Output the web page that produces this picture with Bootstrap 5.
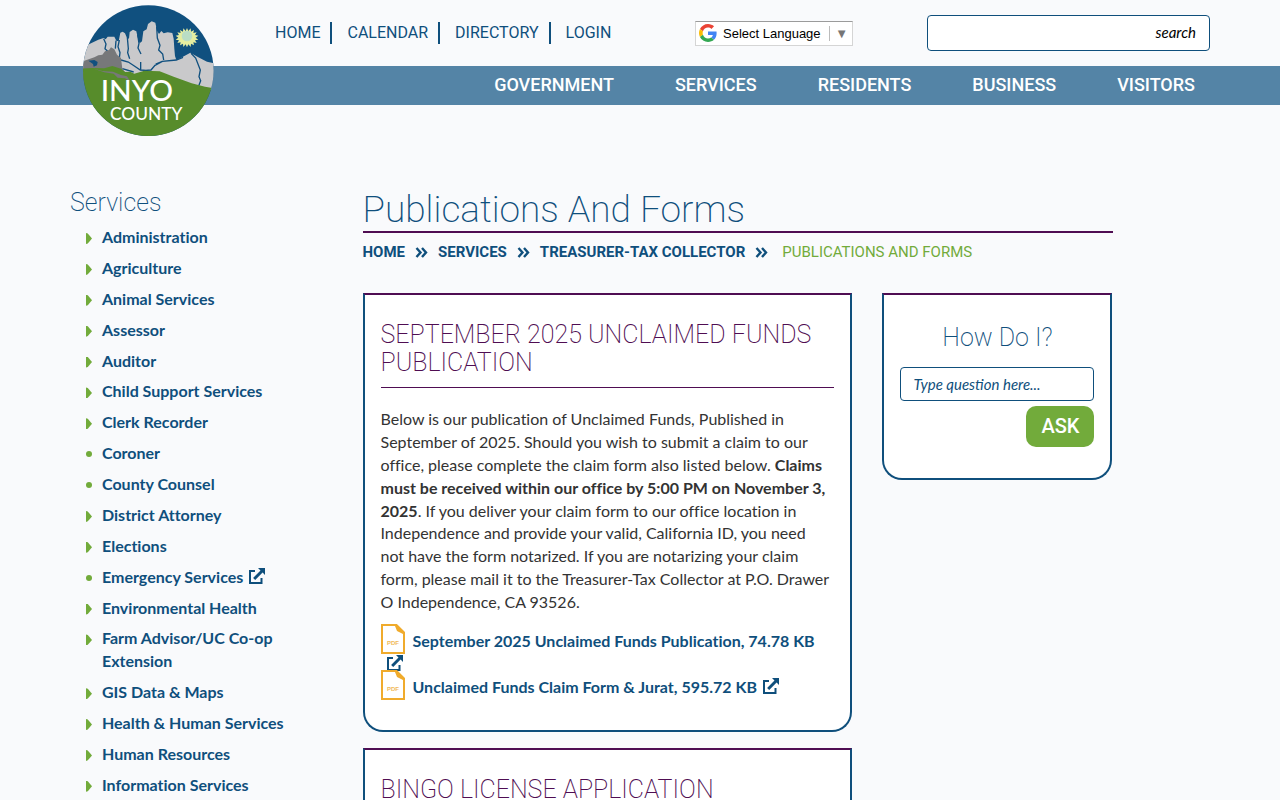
<!DOCTYPE html>
<html lang="en">
<head>
<meta charset="utf-8">
<meta name="viewport" content="width=device-width, initial-scale=1">
<title>Publications And Forms - Inyo County</title>
<link href="https://cdn.jsdelivr.net/npm/bootstrap@5.3.0/dist/css/bootstrap.min.css" rel="stylesheet">
<style>
:root{--navy:#0f4f7c;--steel:#5484a6;--plum:#4f0d52;--leaf:#72ab3b}
body{font-family:Lato,"Liberation Sans",sans-serif;font-size:16px;line-height:1.43;font-variant-ligatures:none;color:#333;background:#f9fafc}
a{color:var(--navy);text-decoration:none}
.site-wrap{max-width:1170px;--bs-gutter-x:30px}
.row{--bs-gutter-x:30px}
.top-strip{height:66px}
.logo-link{position:absolute;left:28px;top:5px;z-index:5}
.logo-link svg{width:131px;height:131px;display:block}
.quick-links{margin-left:205px;font-family:Roboto,sans-serif}
.quick-links li+li{border-left:2px solid var(--navy);margin-left:10px;padding-left:15px}
.translate-box{width:158px;height:25px;background:#fff;border:1px solid #d5d5d5;border-top-color:#9b9b9b;padding:0 4px 0 3px;font:13px "Liberation Sans",Arial,sans-serif}
.translate-box svg{margin-right:6px}
.translate-box select{appearance:none;border:0;background:none;padding:0;width:104px;color:#000;font:inherit}
.translate-box .tri{border-left:1px solid #bbb;color:#767676;padding-left:5px;font-size:13px;line-height:15px}
.site-search{width:283px;height:36px;margin-left:74px;background:#fff;border:1px solid var(--navy);border-radius:4px}
.site-search input{border:0;background:none;min-width:0}
.site-search button{border:0;background:none;font-style:italic;font-size:15px;color:#000;padding:0 13px}
.main-bar{background:var(--steel);height:39px}
.main-bar ul{gap:61px;padding-right:15px}
.main-bar a{color:#fff;font:500 18px/38px Roboto,sans-serif}
.main-area{padding-top:82px}
.thin-head{font-family:Roboto,sans-serif;font-size:25px;font-weight:200;line-height:28px;color:var(--navy);margin:0}
.side-col{padding-top:2px}
.side-menu{margin-top:9px}
.side-menu li{padding-left:32px;margin-bottom:8px;position:relative}
.side-menu a{font-weight:700}
.side-menu li::before{content:"";position:absolute;left:16px;top:7px;width:6px;height:11px;background:var(--leaf);clip-path:polygon(0 0,30% 5%,100% 50%,30% 95%,0 100%)}
.side-menu li.leaf::before{top:9px;width:6px;height:6px;border-radius:50%;clip-path:none}
.ext{width:17px;height:17px;fill:var(--navy);vertical-align:-2px;margin-left:5px}
.page-head{font-family:Roboto,sans-serif;font-size:37px;font-weight:200;line-height:42px;color:var(--navy);border-bottom:2px solid var(--plum);margin:0;padding-top:2px}
.crumbs{font:700 15px/23px Roboto,sans-serif;margin:8px 0 29px}
.crumbs svg{width:13px;height:11px;margin:0 10px;fill:none;stroke:var(--navy);stroke-width:2.4}
.crumbs .here{font-weight:400;color:var(--leaf);margin-left:4px}
.panel-box{background:#fff;border:2px solid var(--navy);border-top-color:var(--plum);border-radius:0 0 20px 20px;padding:26px 16px 31px;margin-bottom:16px}
.panel-box .thin-head.plum{color:var(--plum);text-transform:uppercase;border-bottom:1px solid var(--plum);padding-bottom:10px;margin-bottom:20px}
.files a{font-weight:700}
.pdf{width:24px;height:30px;vertical-align:1px;margin:-8px 8px -8px 0}
.ask-box{padding:29px 16px 31px}
.ask-box .thin-head{margin-bottom:15px}
.ask-box input{height:34px;border:1px solid var(--navy);border-radius:4px;font-size:15px;font-style:italic;padding:0 12px;color:var(--navy)}
.ask-box input::placeholder{color:var(--navy);opacity:1}
.ask-box button{background:var(--leaf);color:#fff;border:0;border-radius:10px;width:68px;height:41px;margin-top:5px;font:500 20px/23px Roboto,sans-serif;padding:0}
</style>
</head>
<body>
<svg width="0" height="0" class="d-none">
  <symbol id="i-ext" viewBox="0 0 17 17"><path d="M1 2h6v2H3v10h9.500v-4h2v6H1z"/><path d="M10 0h7v7l-2.400-2.400-7.400 7.400-2.100-2.100 7.400-7.400z"/></symbol>
  <symbol id="i-pdf" viewBox="0 0 24 30"><path d="M1 1h14.500L23 8.500V29H1z" fill="#fff" stroke="#f0ab2c" stroke-width="2"/><path d="M14 1v1l2 5 6 3h1V8.500L15.500 1z" fill="#f0ab2c"/><text x="12" y="21" text-anchor="middle" font-family="Liberation Sans,sans-serif" font-weight="700" font-size="6" fill="#f0b95a">PDF</text></symbol>
  <symbol id="i-sep" viewBox="0 0 13 11"><path d="M1.500 1l4 4.500-4 4.500M7 1l4 4.500L7 10"/></symbol>
</svg>
<header>
  <div class="container site-wrap position-relative">
    <a class="logo-link" href="#" aria-label="Inyo County home">
      <svg viewBox="38 15 393 393">
        <defs><clipPath id="disc"><circle cx="234" cy="212" r="196"/></clipPath></defs>
        <g clip-path="url(#disc)">
          <path d="M38 15h393v393H38z" fill="#10507f"/>
          <path d="M38 142L62 130 84 119 100 114 106 118 112 110 132 110 138 122 145 124 150 98 157 95 164 100 170 114 176 116 178 96 188 89 198 94 202 112 208 130 215 124 219 94 229 88 233 72 244 64 255 68 260 92 266 102 273 93 280 100 292 97 306 99 310 116 312 146 314 168 318 180 338 170 360 158 384 172 410 185 432 190V270L380 268 300 246 230 222 150 230 38 220z" fill="#c9c9cb"/>
          <path d="M100 116l7 16-3 14 8 8M137 122l-2 24M147 120l-4 20 6 18-2 16M171 112l3 34-2 12 6 18M202 104l4 26-3 14 9 18M259 80l2 34 8 22-4 14 12 12 3 18M338 172l-20 8-42 4-22 12-12 14-24 2M276 184l-20 8M152 180l22 6 18 12 18 12 26 2M211 186v24M156 206l34 10M362 160l14 14 14 36-4 20 5 12-6 16" fill="none" stroke="#10507f" stroke-width="4"/>
          <path d="M36 198L42 182 72 172 84 166 96 164 104 154 116 150 122 142 132 148 140 164 152 174 156 206 184 240H36z" fill="#77787a"/>
          <path d="M54 182l18-2 10 6-2 10-10 4-2-8z" fill="#10507f"/>
          <path d="M36 206l30-2 36 1 24-7 26 8 12 10 16-1 12 6 30-9 46 2 42 16 54 20 40 10 34 6V410H36z" fill="#578c2b"/>
          <path d="M66 205l30 8 32 2 24 10 18 4 10 16-16-10-22-2-12-12-28-4z" fill="#77787a"/>
          <path d="M350 84l4 9 7-8 1 10 9-5-2 9 10-2-5 8 10 2-8 6 8 6-10 2 5 8-10-2 2 9-9-5-1 10-7-8-4 9-4-9-7 8-1-10-9 5 2-9-10 2 5-8-10-2 8-6-8-6 10-2-5-8 10 2-2-9 9 5 1-10 7 8z" fill="#e5eda0"/>
          <circle cx="350" cy="108" r="16" fill="#b9ddc5"/>
          <g font-family="Lato,sans-serif" fill="#fff" font-weight="500">
            <text x="91" y="304" font-size="89">INYO</text>
            <text x="119" y="359" font-size="52">COUNTY</text>
          </g>
        </g>
      </svg>
    </a>
    <div class="top-strip d-flex align-items-center">
      <ul class="quick-links list-unstyled d-flex mb-0">
        <li><a href="#">HOME</a></li><li><a href="#">CALENDAR</a></li><li><a href="#">DIRECTORY</a></li><li><a href="#">LOGIN</a></li>
      </ul>
      <div class="d-flex align-items-center ms-auto">
        <div class="translate-box d-flex align-items-center">
          <svg width="18" height="18" viewBox="0 0 48 48" class="flex-shrink-0"><path fill="#EA4335" d="M24 9.500c3.540 0 6.710 1.220 9.210 3.600l6.850-6.850C35.900 2.380 30.470 0 24 0 14.620 0 6.510 5.380 2.560 13.220l7.980 6.190C12.430 13.720 17.740 9.500 24 9.500z"/><path fill="#4285F4" d="M46.980 24.550c0-1.570-.15-3.090-.38-4.550H24v9.020h12.940c-.58 2.960-2.260 5.480-4.780 7.180l7.730 6c4.510-4.180 7.090-10.360 7.090-17.650z"/><path fill="#FBBC05" d="M10.530 28.590c-.48-1.450-.76-2.990-.76-4.590s.27-3.140.76-4.590l-7.980-6.190C.92 16.460 0 20.120 0 24c0 3.880.92 7.540 2.560 10.780l7.970-6.190z"/><path fill="#34A853" d="M24 48c6.480 0 11.930-2.130 15.890-5.810l-7.730-6c-2.150 1.450-4.920 2.300-8.160 2.300-6.260 0-11.570-4.220-13.470-9.910l-7.980 6.190C6.510 42.620 14.620 48 24 48z"/></svg>
          <select aria-label="Select Language"><option>Select Language</option></select>
          <span class="tri ms-auto">▼</span>
        </div>
        <form class="site-search d-flex">
          <input class="flex-grow-1" type="text" aria-label="Search site"><button type="button">search</button>
        </form>
      </div>
    </div>
  </div>
  <nav class="main-bar">
    <div class="container site-wrap">
      <ul class="list-unstyled d-flex justify-content-end mb-0">
        <li><a href="#">GOVERNMENT</a></li><li><a href="#">SERVICES</a></li><li><a href="#">RESIDENTS</a></li><li><a href="#">BUSINESS</a></li><li><a href="#">VISITORS</a></li>
      </ul>
    </div>
  </nav>
</header>
<div class="container site-wrap main-area">
  <div class="row">
    <aside class="col-3 side-col">
      <h2 class="thin-head">Services</h2>
      <ul class="side-menu list-unstyled">
        <li><a href="#">Administration</a></li>
        <li><a href="#">Agriculture</a></li>
        <li><a href="#">Animal Services</a></li>
        <li><a href="#">Assessor</a></li>
        <li><a href="#">Auditor</a></li>
        <li><a href="#">Child Support Services</a></li>
        <li><a href="#">Clerk Recorder</a></li>
        <li class="leaf"><a href="#">Coroner</a></li>
        <li class="leaf"><a href="#">County Counsel</a></li>
        <li><a href="#">District Attorney</a></li>
        <li><a href="#">Elections</a></li>
        <li class="leaf"><a href="#">Emergency Services<svg class="ext"><use href="#i-ext"/></svg></a></li>
        <li><a href="#">Environmental Health</a></li>
        <li><a href="#">Farm Advisor/UC Co-op<br>Extension</a></li>
        <li><a href="#">GIS Data &amp; Maps</a></li>
        <li><a href="#">Health &amp; Human Services</a></li>
        <li><a href="#">Human Resources</a></li>
        <li><a href="#">Information Services</a></li>
      </ul>
    </aside>
    <main class="col-8">
      <h1 class="page-head">Publications And Forms</h1>
      <nav class="crumbs d-flex align-items-center" aria-label="Breadcrumb">
        <a href="#">HOME</a><svg><use href="#i-sep"/></svg><a href="#">SERVICES</a><svg><use href="#i-sep"/></svg><a href="#">TREASURER-TAX COLLECTOR</a><svg><use href="#i-sep"/></svg><span class="here">PUBLICATIONS AND FORMS</span>
      </nav>
      <div class="row">
        <div class="col-8">
          <section class="panel-box">
            <h2 class="thin-head plum">September 2025 Unclaimed Funds Publication</h2>
            <p class="mb-3 me-1">Below is our publication of Unclaimed Funds, Published in September of 2025. Should you wish to submit a claim to our office, please complete the claim form also listed below. <strong>Claims must be received within our office by 5:00 PM on November 3, 2025</strong>. If you deliver your claim form to our office location in Independence and provide your valid, California ID, you need not have the form notarized. If you are notarizing your claim form, please mail it to the Treasurer-Tax Collector at P.O. Drawer O Independence, CA 93526.</p>
            <div class="files">
              <div><a href="#"><svg class="pdf"><use href="#i-pdf"/></svg>September 2025 Unclaimed Funds Publication, 74.78 KB <svg class="ext"><use href="#i-ext"/></svg></a></div>
              <div><a href="#"><svg class="pdf"><use href="#i-pdf"/></svg>Unclaimed Funds Claim Form &amp; Jurat, 595.72 KB<svg class="ext"><use href="#i-ext"/></svg></a></div>
            </div>
          </section>
          <section class="panel-box">
            <h2 class="thin-head plum">Bingo License Application</h2>
          </section>
        </div>
        <div class="col-4">
          <form class="panel-box ask-box">
            <h2 class="thin-head text-center">How Do I?</h2>
            <input class="w-100 d-block" type="text" placeholder="Type question here..." aria-label="Type question here">
            <button type="button" class="d-block ms-auto">ASK</button>
          </form>
        </div>
      </div>
    </main>
  </div>
</div>
<script src="https://cdn.jsdelivr.net/npm/bootstrap@5.3.0/dist/js/bootstrap.bundle.min.js"></script>
</body>
</html>
